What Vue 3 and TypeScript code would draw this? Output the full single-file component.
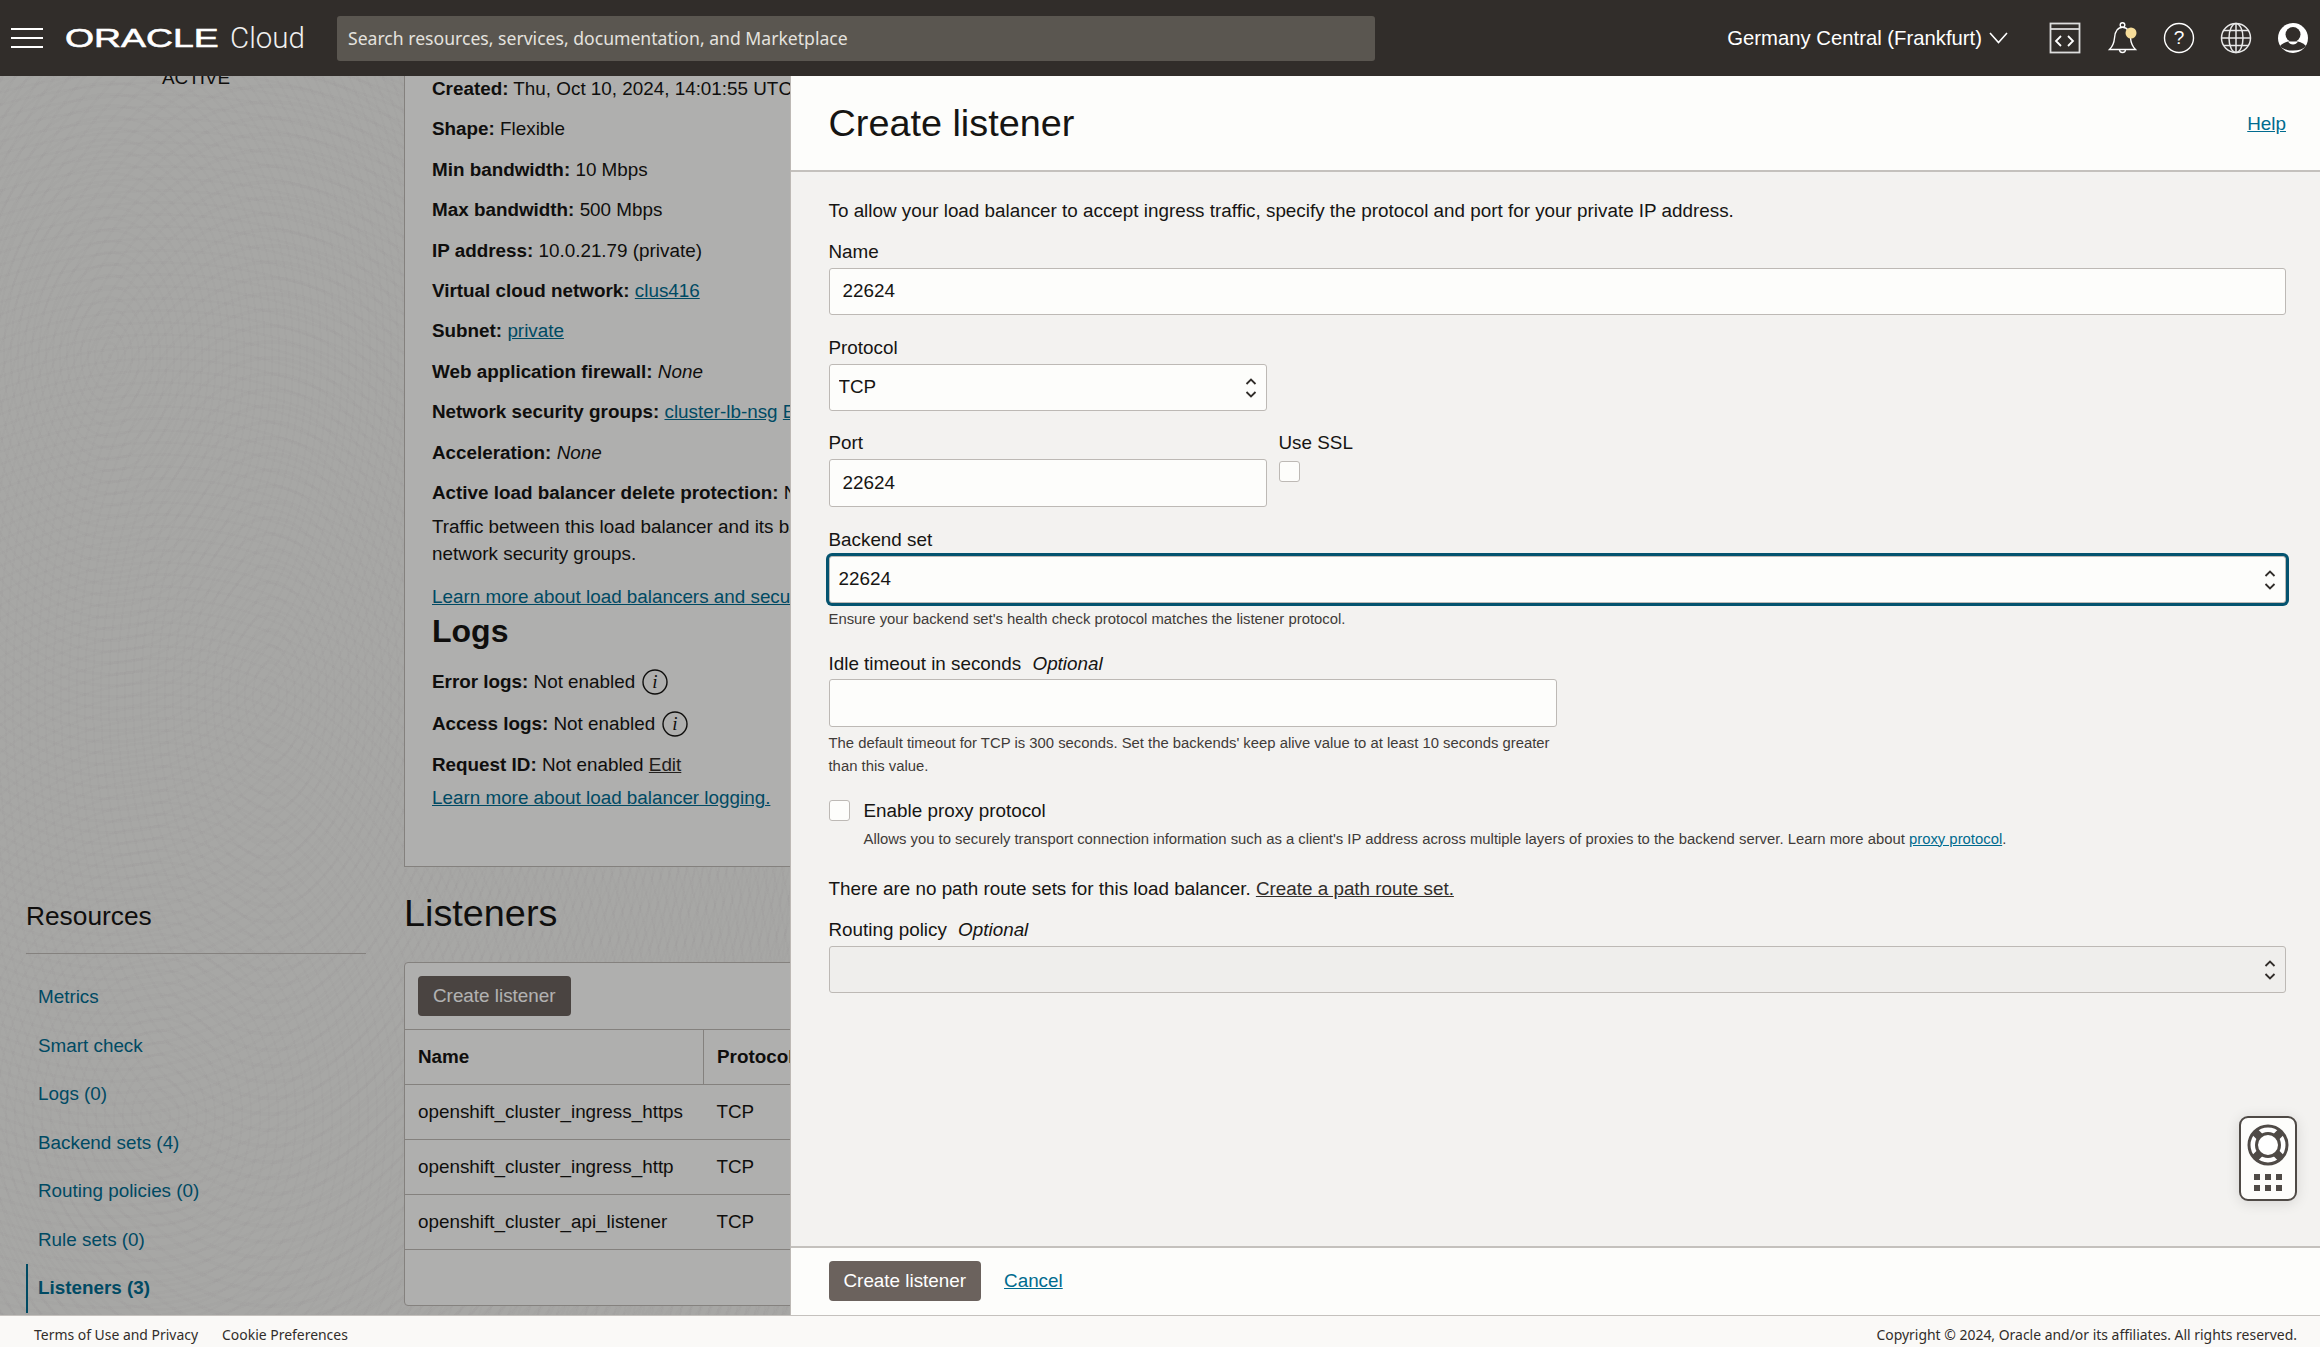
<template>
  <div class="app">
    <header class="topbar">
      <svg class="burger" width="32" height="20" viewBox="0 0 32 20"><path d="M0 1h32M0 10h32M0 19h32" stroke="#fff" stroke-width="2" /></svg>
      <div class="brand"><span class="brand-oracle">ORACLE</span><span class="brand-cloud">Cloud</span></div>
      <div class="search">Search resources, services, documentation, and Marketplace</div>
      <div class="region">
        Germany Central (Frankfurt)
        <svg width="19" height="12" viewBox="0 0 19 12"><path d="M1 1l8.500 9.500L18 1" fill="none" stroke="#fff" stroke-width="1.600" /></svg>
      </div>
      <div class="top-icons">
        <svg width="34" height="34" viewBox="0 0 34 34" fill="none" stroke="#ddd" stroke-width="1.800">
          <rect x="2.500" y="2.500" width="29" height="29" />
          <path d="M2.500 8h29" />
          <path d="M13 15l-5 5 5 5M20 15l5 5-5 5" stroke="#fff" />
        </svg>
        <svg class="bell" width="34" height="34" viewBox="0 0 34 34" fill="none" stroke="#fff" stroke-width="1.400">
          <circle cx="16.500" cy="4" r="2.300" />
          <path d="M16.500 6.300C10.500 6.300 9 11 8.500 17 8 23 6 26 3.500 28.500h26C27 26 25 23 24.500 17 24 11 22.500 6.300 16.500 6.300Z" />
          <path d="M13.500 28.500a3 3 0 0 0 6 0" />
          <circle cx="25" cy="12" r="5.500" fill="#f7dd9a" stroke="none" />
        </svg>
        <svg width="34" height="34" viewBox="0 0 34 34" fill="none" stroke="#fff" stroke-width="1.400">
          <circle cx="17" cy="17" r="14.500" />
          <text x="17" y="23" text-anchor="middle" class="q-mark">?</text>
        </svg>
        <svg width="34" height="34" viewBox="0 0 34 34" fill="none" stroke="#e8e8e8" stroke-width="1.500">
          <circle cx="17" cy="17" r="14.500" />
          <ellipse cx="17" cy="17" rx="7" ry="14.500" />
          <path d="M17 2.500v29M2.500 17h29M5 9.500h24M5 24.500h24" />
        </svg>
        <svg width="34" height="34" viewBox="0 0 34 34">
          <circle cx="17" cy="17" r="15" fill="#fff" />
          <circle cx="17" cy="13.500" r="7.500" fill="#312d2a" />
          <path d="M4 25c3-3.500 7.500-5 13-5s10 1.500 13 5c-2.500 3-7 4.500-13 4.500S6.500 28 4 25Z" fill="#312d2a" />
          <path d="M12 20.500c1 2 3 3 5 3s4-1 5-3z" fill="#fff" />
        </svg>
      </div>
    </header>

    <div class="stage">
      <div class="page">
        <aside class="side">
          <div class="status">ACTIVE</div>
          <h3 class="res-title">Resources</h3>
          <ul class="res-nav">
            <li v-for="item in resources" :key="item" :class="{ current: item === 'Listeners (3)' }">{{ item }}</li>
          </ul>
        </aside>

        <main class="content">
          <section class="details">
            <p v-for="row in info" :key="row.label" class="info-row">
              <b>{{ row.label }}:</b>
              {{ ' ' }}
              <a v-if="row.link">{{ row.value }}</a>
              <em v-else-if="row.italic">{{ row.value }}</em>
              <template v-else>{{ row.value }}</template>
              <template v-if="row.extra">{{ ' ' }}<a>{{ row.extra }}</a></template>
            </p>
            <p class="traffic">Traffic between this load balancer and its backend sets must be configured in security lists or<br />network security groups.</p>
            <p class="learn"><a>Learn more about load balancers and security lists</a></p>
            <h2 class="logs-title">Logs</h2>
            <p class="log-row">
              <b>Error logs:</b> Not enabled
              <svg class="info-i" width="26" height="26" viewBox="0 0 26 26"><circle cx="13" cy="13" r="12" fill="none" stroke="#161513" stroke-width="1.400" /><text x="13" y="19" text-anchor="middle" class="i-mark">i</text></svg>
            </p>
            <p class="log-row">
              <b>Access logs:</b> Not enabled
              <svg class="info-i" width="26" height="26" viewBox="0 0 26 26"><circle cx="13" cy="13" r="12" fill="none" stroke="#161513" stroke-width="1.400" /><text x="13" y="19" text-anchor="middle" class="i-mark">i</text></svg>
            </p>
            <p class="log-row request"><b>Request ID:</b> Not enabled <a class="plain">Edit</a></p>
            <p class="log-learn"><a>Learn more about load balancer logging.</a></p>
          </section>

          <h2 class="listeners-title">Listeners</h2>
          <section class="table-card">
            <div class="toolbar"><button class="primary">Create listener</button></div>
            <table class="listeners">
              <thead>
                <tr><th class="col-name">Name</th><th>Protocol</th></tr>
              </thead>
              <tbody>
                <tr v-for="name in listeners" :key="name"><td>{{ name }}</td><td>TCP</td></tr>
              </tbody>
            </table>
          </section>
        </main>
      </div>

      <div class="scrim"></div>

      <aside class="panel">
        <div class="panel-head">
          <h1>Create listener</h1>
          <a class="link">Help</a>
        </div>

        <div class="panel-body">
          <p class="intro">To allow your load balancer to accept ingress traffic, specify the protocol and port for your private IP address.</p>

          <div class="field first">
            <label>Name</label>
            <input class="ctl" value="22624" />
          </div>

          <div class="field narrow">
            <label>Protocol</label>
            <div class="select-wrap">
              <select class="ctl sel"><option>TCP</option></select>
              <svg class="updown" width="12" height="22" viewBox="0 0 12 22" fill="none" stroke="#312d2a" stroke-width="1.800"><path d="M1.500 7L6 2.500 10.500 7M1.500 15L6 19.500 10.500 15" /></svg>
            </div>
          </div>

          <div class="field port-row">
            <div class="port">
              <label>Port</label>
              <input class="ctl tall" value="22624" />
            </div>
            <div class="ssl">
              <label>Use SSL</label>
              <span class="check"></span>
            </div>
          </div>

          <div class="field">
            <label>Backend set</label>
            <div class="select-wrap">
              <select class="ctl sel focused"><option>22624</option></select>
              <svg class="updown" width="12" height="22" viewBox="0 0 12 22" fill="none" stroke="#312d2a" stroke-width="1.800"><path d="M1.500 7L6 2.500 10.500 7M1.500 15L6 19.500 10.500 15" /></svg>
            </div>
            <p class="hint first-hint">Ensure your backend set's health check protocol matches the listener protocol.</p>
          </div>

          <div class="field idle">
            <label>Idle timeout in seconds <em class="opt">Optional</em></label>
            <input class="ctl tall" value="" />
            <p class="hint wrap-hint">The default timeout for TCP is 300 seconds. Set the backends' keep alive value to at least 10 seconds greater than this value.</p>
          </div>

          <div class="proxy">
            <span class="check"></span>
            <span>Enable proxy protocol</span>
          </div>
          <p class="hint proxy-hint">Allows you to securely transport connection information such as a client's IP address across multiple layers of proxies to the backend server. Learn more about <a class="link">proxy protocol</a>.</p>

          <p class="no-routes">There are no path route sets for this load balancer. <a class="plain">Create a path route set.</a></p>

          <div class="field routing">
            <label>Routing policy <em class="opt">Optional</em></label>
            <div class="select-wrap">
              <select class="ctl sel off"></select>
              <svg class="updown" width="12" height="22" viewBox="0 0 12 22" fill="none" stroke="#312d2a" stroke-width="1.800"><path d="M1.500 7L6 2.500 10.500 7M1.500 15L6 19.500 10.500 15" /></svg>
            </div>
          </div>
        </div>

        <div class="panel-foot">
          <button class="primary">Create listener</button>
          <a class="link cancel">Cancel</a>
        </div>

        <div class="help-widget">
          <svg width="44" height="44" viewBox="0 0 44 44">
            <circle cx="22" cy="22" r="19" fill="#fff" stroke="#4f4a46" stroke-width="3" />
            <path d="M9 9l26 26M35 9L9 35" stroke="#4f4a46" stroke-width="8" />
            <circle cx="22" cy="22" r="11.500" fill="#fff" stroke="#4f4a46" stroke-width="3" />
          </svg>
          <div class="dots"><i v-for="n in 6" :key="n"></i></div>
        </div>
      </aside>
    </div>

    <footer class="footer">
      <div class="foot-links"><span>Terms of Use and Privacy</span><span>Cookie Preferences</span></div>
      <span>Copyright © 2024, Oracle and/or its affiliates. All rights reserved.</span>
    </footer>
  </div>
</template>

<script setup lang="ts">
interface InfoRow {
  label: string;
  value: string;
  link?: boolean;
  italic?: boolean;
  extra?: string;
}

const info: InfoRow[] = [
  { label: "Created", value: "Thu, Oct 10, 2024, 14:01:55 UTC" },
  { label: "Shape", value: "Flexible" },
  { label: "Min bandwidth", value: "10 Mbps" },
  { label: "Max bandwidth", value: "500 Mbps" },
  { label: "IP address", value: "10.0.21.79 (private)" },
  { label: "Virtual cloud network", value: "clus416", link: true },
  { label: "Subnet", value: "private", link: true },
  { label: "Web application firewall", value: "None", italic: true },
  { label: "Network security groups", value: "cluster-lb-nsg", link: true, extra: "Edit" },
  { label: "Acceleration", value: "None", italic: true },
  { label: "Active load balancer delete protection", value: "No" },
];

const resources = [
  "Metrics",
  "Smart check",
  "Logs (0)",
  "Backend sets (4)",
  "Routing policies (0)",
  "Rule sets (0)",
  "Listeners (3)",
];

const listeners = [
  "openshift_cluster_ingress_https",
  "openshift_cluster_ingress_http",
  "openshift_cluster_api_listener",
];
</script>

<style>
html,
body {
  margin: 0;
  overflow: hidden;
}
</style>

<style scoped>
.app {
  display: flex;
  flex-direction: column;
  height: 1347px;
  overflow: hidden;
  font-family: "Liberation Sans", Arial, sans-serif;
  font-size: 18.85px;
  line-height: 23px;
  color: #161513;
}

h1,
h2,
h3,
p,
ul {
  margin: 0;
  padding: 0;
}

a {
  color: #006b8f;
  text-decoration: underline;
}

a.plain {
  color: #312d2a;
}

/* top bar */
.topbar {
  flex: none;
  display: flex;
  align-items: center;
  height: 76px;
  background: #312d2a;
  color: #fff;
}

.burger {
  margin-left: 11px;
}

.brand {
  display: flex;
  align-items: center;
  width: 294px;
  flex: none;
}

.brand-oracle {
  display: inline-block;
  width: 110px;
  margin-left: 22px;
  margin-right: 55px;
  font-size: 26.5px;
  line-height: 30px;
  transform: scaleX(1.41);
  transform-origin: left center;
  -webkit-text-stroke: 0.6px #fff;
}

.brand-cloud {
  font-family: Roboto, sans-serif;
  font-weight: 300;
  font-size: 29.5px;
  color: #f0f0f0;
}

.search {
  flex: none;
  box-sizing: border-box;
  width: 1038px;
  height: 45px;
  padding-left: 11px;
  border-radius: 3px;
  background: #5a5650;
  color: #e4e2df;
  font-family: "Noto Sans", sans-serif;
  font-size: 17.6px;
  line-height: 44px;
}

.region {
  display: flex;
  align-items: center;
  gap: 7px;
  margin-left: auto;
  font-size: 20.3px;
}

.top-icons {
  display: flex;
  gap: 23px;
  margin-left: 40px;
  margin-right: 10px;
}

.bell {
  transform: translateX(1px);
}

.q-mark {
  font-size: 19px;
  fill: #fff;
  stroke: none;
}

/* dimmed page */
.stage {
  position: relative;
  flex: 1;
  min-height: 0;
  overflow: hidden;
}

.page {
  display: grid;
  grid-template-columns: 404px 1fr;
  height: 100%;
  background-color: #f0efed;
  background-image:
    repeating-radial-gradient(ellipse 130px 210px at 110px 280px, rgba(0, 0, 0, 0.012) 0 2px, transparent 2px 7px),
    repeating-radial-gradient(ellipse 120px 240px at 270px 620px, rgba(0, 0, 0, 0.01) 0 2px, transparent 2px 8px),
    repeating-radial-gradient(ellipse 150px 200px at 160px 1040px, rgba(0, 0, 0, 0.01) 0 2px, transparent 2px 9px);
}

.side {
  padding-left: 26px;
}

.status {
  margin-top: -10px;
  width: 340px;
  text-align: center;
  text-transform: uppercase;
}

.res-title {
  width: 340px;
  margin-top: 811px;
  padding-bottom: 21px;
  border-bottom: 1px solid #bdb9b5;
  font-size: 26.3px;
  font-weight: 400;
  line-height: 32px;
}

.res-nav {
  margin-top: 19px;
  list-style: none;
  color: #006b8f;
}

.res-nav li {
  height: 48.5px;
  padding-left: 12px;
  line-height: 48.5px;
}

.res-nav li.current {
  padding-left: 10px;
  border-left: 2px solid #006b8f;
  font-weight: 700;
}

.details {
  box-sizing: border-box;
  height: 791px;
  padding-top: 1px;
  padding-left: 27px;
  border-left: 1px solid #bdb9b5;
  border-bottom: 1px solid #bdb9b5;
  background: #fbfbf9;
  white-space: nowrap;
}

.info-row {
  margin-bottom: 17.4px;
}

.traffic {
  margin-top: -8px;
  line-height: 27px;
}

.learn {
  margin-top: 18px;
}

.logs-title {
  margin-top: 4px;
  font-size: 32px;
  line-height: 38px;
}

.log-row {
  display: block;
  margin-top: 17px;
}

.logs-title + .log-row {
  margin-top: 20px;
}

.log-row.request {
  margin-top: 16px;
}

.info-i {
  vertical-align: middle;
  margin-left: 2px;
  margin-top: -2px;
}

.i-mark {
  font-family: "Liberation Serif", serif;
  font-style: italic;
  font-size: 19px;
  fill: #161513;
}

.log-learn {
  margin-top: 10px;
}

.listeners-title {
  margin-top: 24px;
  font-size: 37.8px;
  font-weight: 400;
  line-height: 44px;
}

.table-card {
  margin-top: 27px;
  padding-bottom: 55px;
  border: 1px solid #bdb9b5;
  border-radius: 4px 0 0 4px;
  background: #fbfbf9;
}

.toolbar {
  padding: 13px;
}

.primary {
  height: 40px;
  padding: 0 15px 1px;
  border: 0;
  border-radius: 4px;
  background: #6b625d;
  color: #fff;
  font: inherit;
}

.listeners {
  width: 100%;
  border-collapse: collapse;
  table-layout: fixed;
}

.listeners th,
.listeners td {
  height: 52px;
  padding: 0 13px 2px;
  border-top: 1px solid #bdb9b5;
  border-bottom: 1px solid #bdb9b5;
  text-align: left;
  white-space: nowrap;
}

.col-name {
  width: 272px;
  border-right: 1px solid #bdb9b5;
}

.scrim {
  position: absolute;
  inset: 0;
  background: rgba(0, 0, 0, 0.3);
}

/* slide-in panel */
.panel {
  position: absolute;
  top: 0;
  right: 0;
  bottom: 0;
  left: 790px;
  display: flex;
  flex-direction: column;
  border-left: 1px solid #bdb9b5;
  background: #f3f2f0;
}

.panel-head {
  flex: none;
  box-sizing: border-box;
  display: flex;
  justify-content: space-between;
  align-items: center;
  height: 96px;
  padding: 0 34px 0 37.500px;
  border-bottom: 2px solid #c4c1bd;
  background: #fdfdfb;
}

.panel-head h1 {
  font-size: 37.8px;
  font-weight: 400;
  line-height: 44px;
}

.link {
  color: #006b8f;
}

.panel-body {
  flex: 1;
  min-height: 0;
  padding: 27px 34px 0 37.500px;
}

.field {
  margin-top: 20.5px;
}

.field.first {
  margin-top: 18px;
}

.field.narrow {
  width: 438px;
}

.field label {
  display: block;
  margin-bottom: 4px;
  line-height: 24px;
}

.opt {
  margin-left: 6px;
}

.ctl {
  display: block;
  box-sizing: border-box;
  width: 100%;
  height: 47px;
  padding: 0 13px 1px;
  border: 1px solid #bdb9b5;
  border-radius: 3px;
  outline: none;
  background: #fdfdfb;
  color: #161513;
  font: inherit;
}

.ctl.tall {
  height: 48px;
}

.sel {
  padding: 0 9px 1px;
  appearance: none;
}

.sel.focused {
  box-shadow: 0 0 0 3px #04536f;
}

.sel.off {
  background: #efeeec;
}

.select-wrap {
  position: relative;
}

.updown {
  position: absolute;
  top: 13px;
  right: 10px;
}

.port-row {
  display: flex;
  gap: 12px;
}

.port {
  width: 438px;
}

.ssl label {
  margin-bottom: 6px;
}

.check {
  display: block;
  box-sizing: border-box;
  width: 21px;
  height: 21px;
  border: 1px solid #bdb9b5;
  border-radius: 3px;
  background: #fdfdfb;
}

.hint {
  font-size: 14.85px;
  line-height: 23px;
  color: #3f3b38;
}

.first-hint {
  margin-top: 5px;
}

.idle {
  width: 728px;
  margin-top: 21px;
}

.idle label {
  margin-bottom: 3px;
}

.wrap-hint {
  margin-top: 5px;
}

.proxy {
  display: flex;
  align-items: center;
  gap: 14px;
  margin-top: 21px;
}

.proxy-hint {
  margin-top: 6px;
  margin-left: 35px;
}

.no-routes {
  margin-top: 26px;
}

.routing {
  margin-top: 18px;
}

.panel-foot {
  flex: none;
  box-sizing: border-box;
  display: flex;
  align-items: center;
  gap: 23px;
  height: 69px;
  padding: 0 37.500px 2px;
  border-top: 2px solid #c4c1bd;
  background: #fdfdfb;
}

.help-widget {
  position: absolute;
  top: 1040px;
  left: 1448px;
  box-sizing: border-box;
  width: 58px;
  height: 85px;
  padding-top: 5px;
  border: 2px solid #4f4a46;
  border-radius: 9px;
  background: #fdfdfb;
  box-shadow: 0 2px 14px rgba(0, 0, 0, 0.12);
  text-align: center;
}

.help-widget svg {
  display: block;
  margin: 0 auto;
}

.dots {
  display: grid;
  grid-template-columns: repeat(3, 6px);
  gap: 5px;
  justify-content: center;
  margin-top: 7px;
}

.dots i {
  height: 6px;
  background: #4f4a46;
}

.footer {
  flex: none;
  display: flex;
  justify-content: space-between;
  align-items: center;
  height: 32px;
  padding: 7px 23px 0 34px;
  box-sizing: border-box;
  border-top: 1px solid #c4c1bd;
  background: #faf9f7;
  color: #312d2a;
  font-family: "Noto Sans", sans-serif;
  font-size: 13.95px;
  line-height: 20px;
}

.foot-links {
  display: flex;
  gap: 24px;
}
</style>
